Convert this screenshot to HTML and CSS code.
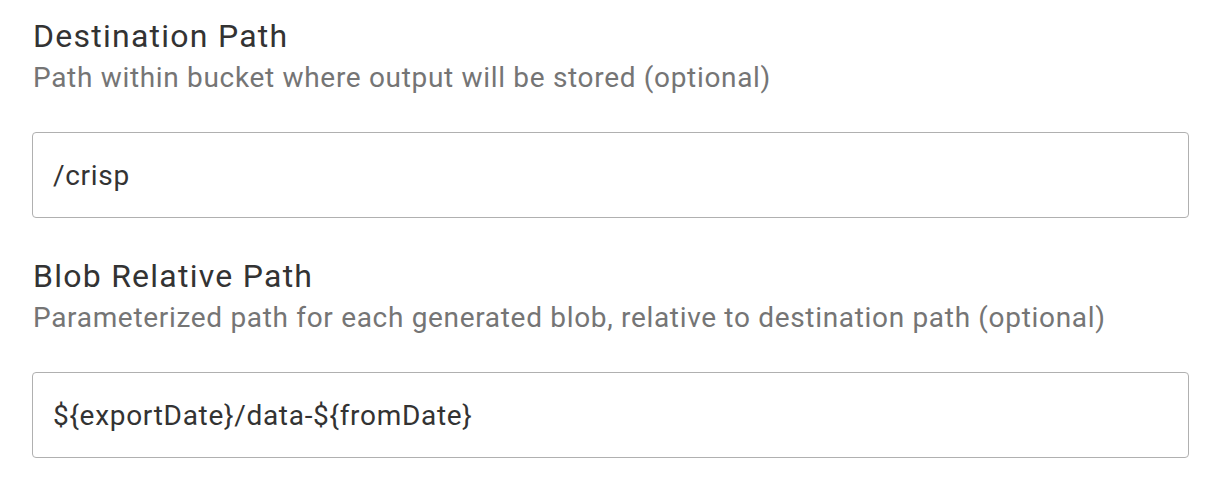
FILE: index.html
```html
<!DOCTYPE html>
<html>
<head>
<meta charset="utf-8">
<link rel="stylesheet" href="styles.css">
</head>
<body>
<div class="form">
  <div class="field">
    <div class="label">Destination Path</div>
    <div class="help">Path within bucket where output will be stored (optional)</div>
    <div class="input">/crisp</div>
  </div>
  <div class="field">
    <div class="label">Blob Relative Path</div>
    <div class="help">Parameterized path for each generated blob, relative to destination path (optional)</div>
    <div class="input">${exportDate}/data-${fromDate}</div>
  </div>
</div>
</body>
</html>
```
FILE: styles.css
```css
html, body {
  margin: 0;
  padding: 0;
  background: #ffffff;
}
body {
  font-family: Roboto, "Noto Sans", sans-serif;
}
.form {
  display: flex;
  flex-direction: column;
  gap: 38px;
  padding: 16px 29px 0 32px;
}
.field {
  display: flex;
  flex-direction: column;
}
.label {
  font-size: 32px;
  line-height: 40px;
  letter-spacing: 1.25px;
  color: #333333;
  padding-left: 1px;
}
.help {
  margin-top: 6px;
  font-size: 28px;
  line-height: 32px;
  letter-spacing: 0.68px;
  color: #757575;
  padding-left: 1px;
}
.input {
  margin-top: 38px;
  height: 84px;
  border: 1px solid #b0b0b0;
  border-radius: 4px;
  display: flex;
  align-items: center;
  padding: 0 20px;
  font-size: 28px;
  letter-spacing: 0.7px;
  color: #333333;
}
```
